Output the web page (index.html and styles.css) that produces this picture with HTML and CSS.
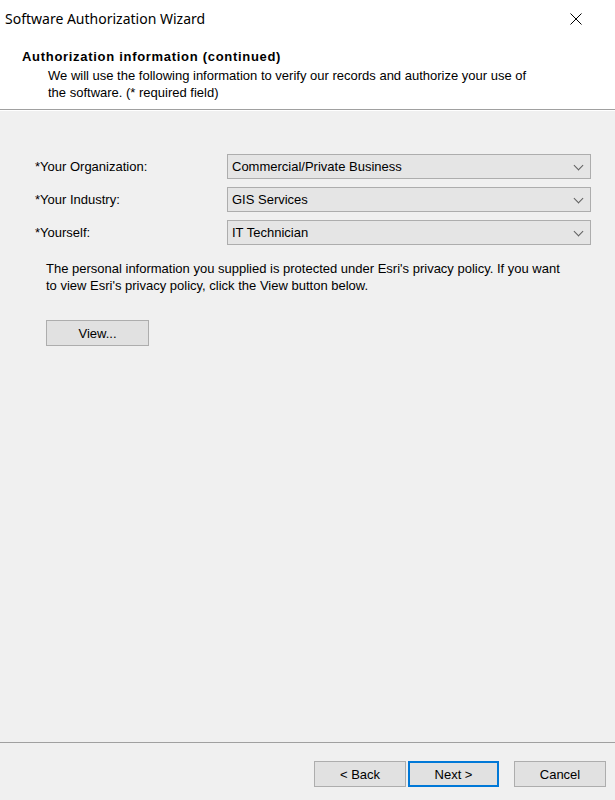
FILE: index.html
```html
<!DOCTYPE html>
<html lang="en">
<head>
    <meta charset="UTF-8">
    <title>Software Authorization Wizard</title>
    <link rel="stylesheet" href="styles.css">
</head>
<body>
    <div class="wizard">
        <div class="wizard__titlebar">
            <span class="wizard__caption">Software Authorization Wizard</span>
            <svg class="wizard__close" width="12" height="12" viewBox="0 0 12 12">
                <path d="M0.5 0.5 L11.5 11.5 M11.5 0.5 L0.5 11.5" stroke="#000" stroke-width="1" fill="none"/>
            </svg>
        </div>

        <div class="wizard__header">
            <h1 class="wizard__heading">Authorization information (continued)</h1>
            <p class="wizard__intro">We will use the following information to verify our records and authorize your use of the software. (* required field)</p>
        </div>

        <div class="wizard__body">
            <div class="form">
                <label class="form__label">*Your Organization:</label>
                <div class="combo"><span>Commercial/Private Business</span><i class="combo__arrow"></i></div>

                <label class="form__label">*Your Industry:</label>
                <div class="combo"><span>GIS Services</span><i class="combo__arrow"></i></div>

                <label class="form__label">*Yourself:</label>
                <div class="combo"><span>IT Technician</span><i class="combo__arrow"></i></div>
            </div>

            <p class="privacy">The personal information you supplied is protected under Esri's privacy policy. If you want to view Esri's privacy policy, click the View button below.</p>

            <button class="btn btn--view">View...</button>
        </div>

        <div class="wizard__footer">
            <button class="btn btn--back">&lt; Back</button>
            <button class="btn btn--next _default">Next &gt;</button>
            <button class="btn btn--cancel">Cancel</button>
        </div>
    </div>
</body>
</html>
```

FILE: styles.css
```css
* {
    box-sizing: border-box;
}

body {
    margin: 0;
    font-family: "Liberation Sans", Arial, sans-serif;
    font-size: 13px;
    color: #000;
    background: #f0f0f0;
}

.wizard {
    width: 615px;
    height: 800px;
    display: flex;
    flex-direction: column;
    background: #f0f0f0;
}

/* ===== title bar ===== */
.wizard__titlebar {
    height: 37px;
    padding: 0 33px 0 5px;
    display: flex;
    align-items: center;
    justify-content: space-between;
    background: #fff;
}

.wizard__caption {
    font-family: "Noto Sans", "Open Sans", sans-serif;
    font-size: 14px;
    padding-bottom: 1px;
}

.wizard__close {
    display: block;
}

/* ===== header ===== */
.wizard__header {
    height: 73px;
    padding: 12px 20px 0 22px;
    background: #fff;
    border-bottom: 1px solid #a0a0a0;
    box-shadow: 0 1px 0 #fff;
}

.wizard__heading {
    margin: 0;
    font-size: 13px;
    line-height: 16px;
    font-weight: bold;
    letter-spacing: 0.7px;
}

.wizard__intro {
    margin: 2px 0 0 26px;
    max-width: 495px;
    line-height: 17px;
}

/* ===== body ===== */
.wizard__body {
    flex: 1;
    padding: 44px 24px 0 35px;
}

.form {
    display: grid;
    grid-template-columns: 192px 1fr;
    row-gap: 8px;
    align-items: center;
}

.combo {
    position: relative;
    height: 25px;
    padding: 0 24px 0 4px;
    display: flex;
    align-items: center;
    background: #e5e5e5;
    border: 1px solid #adadad;
}

.combo__arrow {
    position: absolute;
    right: 8px;
    top: 7px;
    width: 7px;
    height: 7px;
    border-right: 1px solid #606060;
    border-bottom: 1px solid #606060;
    transform: rotate(45deg);
}

.privacy {
    margin: 15px 0 0 11px;
    max-width: 524px;
    line-height: 17px;
}

/* ===== buttons ===== */
.btn {
    height: 26px;
    padding: 0;
    font-family: inherit;
    font-size: 13px;
    color: #000;
    background: #e1e1e1;
    border: 1px solid #adadad;
}

.btn--view {
    width: 103px;
    margin: 26px 0 0 11px;
}

.btn._default {
    border: 2px solid #0078d7;
}

/* ===== footer ===== */
.wizard__footer {
    height: 58px;
    padding: 18px 9px 0 0;
    display: flex;
    justify-content: flex-end;
    border-top: 1px solid #a0a0a0;
}

.btn--back {
    width: 92px;
}

.btn--next {
    width: 91px;
    margin-left: 2px;
}

.btn--cancel {
    width: 92px;
    margin-left: 15px;
}
```
